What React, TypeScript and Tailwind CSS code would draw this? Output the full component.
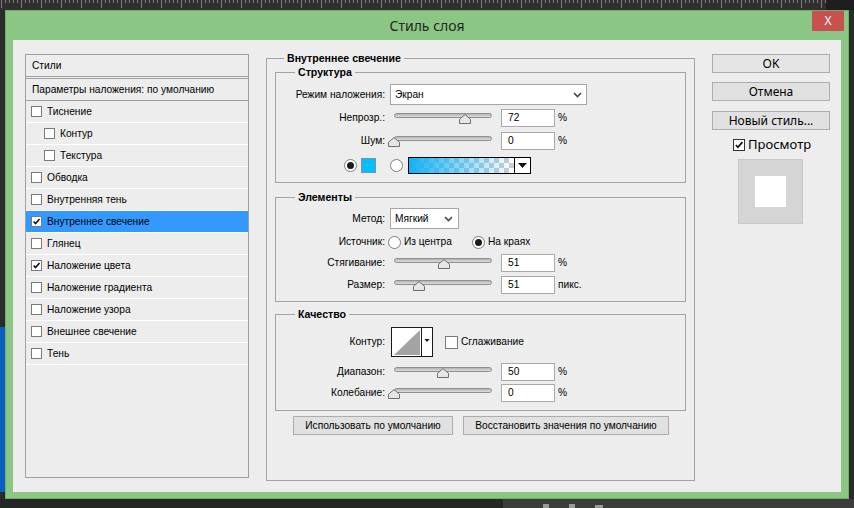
import React from 'react';

type Row = { label: string; indent?: boolean; checked?: boolean; active?: boolean };

const rows: Row[] = [
  { label: 'Тиснение' },
  { label: 'Контур', indent: true },
  { label: 'Текстура', indent: true },
  { label: 'Обводка' },
  { label: 'Внутренняя тень' },
  { label: 'Внутреннее свечение', checked: true, active: true },
  { label: 'Глянец' },
  { label: 'Наложение цвета', checked: true },
  { label: 'Наложение градиента' },
  { label: 'Наложение узора' },
  { label: 'Внешнее свечение' },
  { label: 'Тень' },
];

const Tick = () => (
  <svg viewBox="0 0 11 11" className="w-full h-full">
    <path d="M2 5.5 L4.3 8 L9.2 2.3" fill="none" stroke="#111" strokeWidth="1.9" />
  </svg>
);

const Box = ({ checked = false, size = 'w-[11px] h-[11px]' }: { checked?: boolean; size?: string }) => (
  <div className={`${size} shrink-0 border border-[#7a7a7a] bg-white`}>{checked && <Tick />}</div>
);

const Radio = ({ on = false }: { on?: boolean }) => (
  <div className="w-[13px] h-[13px] shrink-0 rounded-full border border-[#7d7d7d] bg-white flex items-center justify-center">
    {on && <div className="w-[7px] h-[7px] rounded-full bg-[#1c1c1c]" />}
  </div>
);

const Chevron = () => (
  <svg width="9" height="6" viewBox="0 0 9 6">
    <path d="M1 1 L4.5 4.5 L8 1" fill="none" stroke="#4a4a4a" strokeWidth="1.7" />
  </svg>
);

const Slider = ({ frac }: { frac: number }) => (
  <div className="relative ml-[9px] w-[98px] h-[18px] shrink-0">
    <div className="absolute left-0 right-0 top-[4px] h-[5px] rounded-full border border-[#8f8f8f] bg-gradient-to-b from-[#b4b4b4] to-[#dedede]" />
    <svg
      width="12"
      height="10"
      viewBox="0 0 12 10"
      className="absolute top-[5px]"
      style={{ left: Math.round(frac * 98) - 6 }}
    >
      <path d="M0.5 9.5 L0.5 5.2 L6 0.6 L11.5 5.2 L11.5 9.5 Z" fill="#e6e6e6" stroke="#6f6f6f" />
    </svg>
  </div>
);

const Field = ({ value }: { value: string }) => (
  <div className="ml-[9px] w-[54px] h-[18px] shrink-0 border border-[#a9a9a9] bg-white pl-[6px] leading-[16px]">
    {value}
  </div>
);

const SliderRow = ({ label, frac, value, unit, className = '' }: { label: string; frac: number; value: string; unit: string; className?: string }) => (
  <div className={`flex items-center h-[18px] ${className}`}>
    <div className="w-[109px] text-right shrink-0">{label}</div>
    <Slider frac={frac} />
    <Field value={value} />
    <div className="ml-[3px]">{unit}</div>
  </div>
);

const Legend = ({ children }: { children: React.ReactNode }) => (
  <legend className="ml-[19px] px-[3px] font-bold text-[10.6px] leading-[12px]">{children}</legend>
);

const Button = ({ children, className = '' }: { children: React.ReactNode; className?: string }) => (
  <div className={`h-[19px] border border-[#adadad] bg-[#e1e1e1] flex items-center justify-center leading-[15px] ${className}`}>
    {children}
  </div>
);

export default function App() {
  return (
    <div className="relative w-[854px] h-[508px] bg-[#2b2b2b] overflow-hidden text-[10.2px] text-black font-['Liberation_Sans',Arial,sans-serif]">
      {/* desktop behind the window */}
      <div className="absolute left-0 top-[327px] w-[6px] h-[165px] bg-[#0b5ec4]" />

      {/* ruler */}
      <div className="flex h-[10px]">
        <div className="w-[826px] h-full bg-[#2f2f2f]">
          <svg width="826" height="9">
            {Array.from({ length: 207 }).map((_, i) => (
              <rect key={i} x={i * 4 + 1} y={0} width={1} height={i % 5 === 0 ? 8 : 3} fill="#7c7c7c" />
            ))}
          </svg>
        </div>
        <div className="flex-1 bg-[#1e1e1e]" />
      </div>

      {/* dialog */}
      <div className="relative ml-[5px] w-[844px] h-[489px] border border-[#6fad69] bg-[#8bc684]">
        <div className="h-[29px] flex items-center justify-center font-['Noto_Sans',sans-serif] text-[14px] text-[#262626]">
          Стиль слоя
        </div>
        <div className="absolute right-[4px] top-0 w-[32px] h-[20px] bg-[#c75050] flex items-center justify-center text-white text-[12px] font-['Noto_Sans',sans-serif]">
          X
        </div>

        <div className="mx-[7px] h-[452px] bg-[#ededed] flex items-start">
          {/* styles list */}
          <div className="ml-[12px] mt-[14px] w-[224px] h-[424px] shrink-0 border border-[#a0a0a0]">
            <div className="h-[22px] border-b border-[#a0a0a0] flex items-center pl-[6px]">Стили</div>
            <div className="mt-[1px] h-[23px] border-y border-[#a0a0a0] flex items-center pl-[6px]">
              Параметры наложения: по умолчанию
            </div>
            {rows.map((r) => (
              <div
                key={r.label}
                className={`h-[22px] border-b border-white flex items-center ${r.indent ? 'pl-[18px]' : 'pl-[5px]'} ${r.active ? 'bg-[#3399ff]' : ''}`}
              >
                <Box checked={r.checked} />
                <span className="ml-[5px]">{r.label}</span>
              </div>
            ))}
          </div>

          {/* settings */}
          <fieldset className="ml-[17px] mt-[12px] w-[429px] h-[429px] shrink-0 border border-[#a3a3a3]">
            <legend className="ml-[17px] px-[3px] font-bold text-[10.6px] leading-[12px]">Внутреннее свечение</legend>

            <fieldset className="mx-[8px] mt-[2px] border border-[#a3a3a3] pt-[6px] pb-[9px]">
              <Legend>Структура</Legend>
              <div className="flex items-center h-[21px]">
                <div className="w-[109px] text-right shrink-0">Режим наложения:</div>
                <div className="ml-[5px] w-[197px] h-[21px] border border-[#a6a6a6] bg-white flex items-center justify-between pl-[4px] pr-[4px]">
                  <span>Экран</span>
                  <Chevron />
                </div>
              </div>
              <SliderRow className="mt-[4px]" label="Непрозр.:" frac={0.72} value="72" unit="%" />
              <SliderRow className="mt-[5px]" label="Шум:" frac={0} value="0" unit="%" />
              <div className="mt-[7px] h-[16px] flex items-center">
                <div className="ml-[68px]">
                  <Radio on />
                </div>
                <div className="ml-[4px] w-[15px] h-[15px] border border-[#8d8d8d] bg-[#00c0ff]" />
                <div className="ml-[14px]">
                  <Radio />
                </div>
                <div className="ml-[5px] w-[123px] h-[17px] border border-black flex">
                  <div className="flex-1 bg-[repeating-conic-gradient(#cfcfcf_0%_25%,#ffffff_0%_50%)] bg-[length:10px_10px]">
                    <div className="w-full h-full bg-gradient-to-r from-[#14b2f6] via-[#14b2f6]/50 to-transparent" />
                  </div>
                  <div className="w-[16px] border-l border-black bg-white flex items-center justify-center">
                    <svg width="9" height="5" viewBox="0 0 9 5">
                      <path d="M0 0 L9 0 L4.5 5 Z" fill="#111" />
                    </svg>
                  </div>
                </div>
              </div>
            </fieldset>

            <fieldset className="mx-[8px] mt-[8px] border border-[#a3a3a3] pt-[5px] pb-[7px]">
              <Legend>Элементы</Legend>
              <div className="flex items-center h-[21px]">
                <div className="w-[109px] text-right shrink-0">Метод:</div>
                <div className="ml-[5px] w-[69px] h-[21px] border border-[#a6a6a6] bg-white flex items-center justify-between pl-[4px] pr-[5px]">
                  <span>Мягкий</span>
                  <Chevron />
                </div>
              </div>
              <div className="mt-[4px] h-[18px] flex items-center">
                <div className="w-[109px] text-right shrink-0">Источник:</div>
                <div className="ml-[3px]">
                  <Radio />
                </div>
                <span className="ml-[3px] w-[68px]">Из центра</span>
                <Radio on />
                <span className="ml-[3px]">На краях</span>
              </div>
              <SliderRow className="mt-[3px]" label="Стягивание:" frac={0.51} value="51" unit="%" />
              <SliderRow className="mt-[4px]" label="Размер:" frac={0.255} value="51" unit="пикс." />
            </fieldset>

            <fieldset className="mx-[8px] mt-[6px] border border-[#a3a3a3] pt-[7px] pb-[8px]">
              <Legend>Качество</Legend>
              <div className="h-[30px] flex items-center">
                <div className="w-[109px] text-right shrink-0">Контур:</div>
                <svg width="42" height="30" viewBox="0 0 42 30" className="ml-[6px] shrink-0">
                  <rect x="0.5" y="0.5" width="41" height="29" fill="#fff" stroke="#1a1a1a" />
                  <path d="M3 28 L29 3 L29 28 Z" fill="#a3a3a3" />
                  <line x1="30.5" y1="0" x2="30.5" y2="30" stroke="#1a1a1a" />
                  <path d="M33.5 12 L38.5 12 L36 15 Z" fill="#111" />
                </svg>
                <div className="ml-[12px]">
                  <Box size="w-[13px] h-[13px]" />
                </div>
                <span className="ml-[3px]">Сглаживание</span>
              </div>
              <SliderRow className="mt-[6px]" label="Диапазон:" frac={0.5} value="50" unit="%" />
              <SliderRow className="mt-[3px]" label="Колебание:" frac={0} value="0" unit="%" />
            </fieldset>

            <div className="mt-[5px] ml-[26px] flex gap-[10px]">
              <Button className="w-[160px]">Использовать по умолчанию</Button>
              <Button className="w-[206px]">Восстановить значения по умолчанию</Button>
            </div>
          </fieldset>

          {/* actions */}
          <div className="ml-[17px] mt-[14px] w-[118px] shrink-0 flex flex-col font-['Noto_Sans',sans-serif] text-[12px]">
            <Button className="border-[#3c7fb1] bg-[#e5e5e5]">OK</Button>
            <Button className="mt-[9px]">Отмена</Button>
            <Button className="mt-[10px]">Новый стиль...</Button>
            <div className="mt-[8px] h-[14px] flex items-center ml-[21px]">
              <div className="w-[12px] h-[12px] border border-[#333] bg-white">
                <Tick />
              </div>
              <span className="ml-[3px] text-[13px]">Просмотр</span>
            </div>
            <div className="mt-[7px] ml-[26px] w-[65px] h-[65px] bg-[#d5d5d5] border border-[#c8c8c8] flex items-center justify-center">
              <div className="w-[31px] h-[31px] bg-white" />
            </div>
          </div>
        </div>
      </div>

      {/* taskbar strip */}
      <div className="flex h-[9px]">
        <div className="w-[503px] bg-[#262626]" />
        <div className="flex-1 bg-[#3c3c3c] flex items-end gap-[20px] pl-[40px]">
          <div className="w-[6px] h-[4px] bg-[#9a9a9a]" />
          <div className="w-[6px] h-[4px] bg-[#9a9a9a]" />
          <div className="w-[8px] h-[3px] bg-[#9a9a9a]" />
        </div>
      </div>
    </div>
  );
}
